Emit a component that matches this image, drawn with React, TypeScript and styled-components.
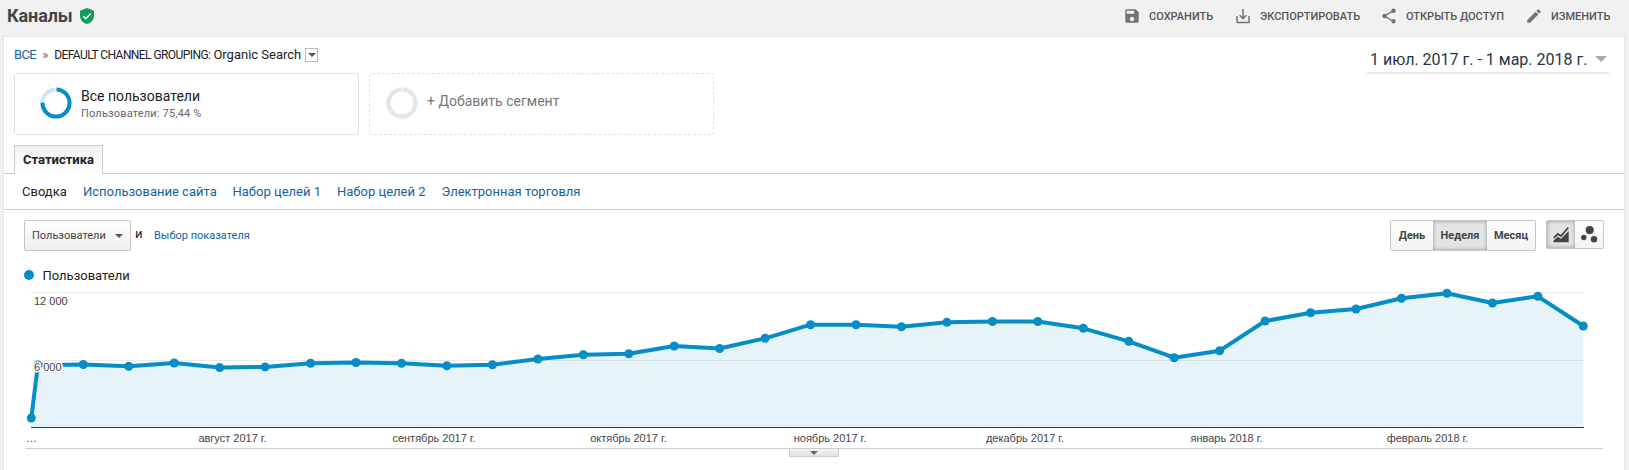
import styled, { createGlobalStyle, css } from 'styled-components';
import { MdSave, MdShare, MdEdit } from 'react-icons/md';

const FIRST_X = 83.3;
const STEP = 45.455;
const AXIS_Y = 427;

const weeks = [
  364.5, 366.2, 363, 367.6, 366.9, 363.3, 362.5, 363.3, 365.7, 364.7, 359, 354.7, 353.8, 346, 348.5, 338.3, 324.7,
  324.7, 326.8, 322.3, 321.5, 321.5, 328.3, 341.3, 357.7, 350.7, 321, 312.7, 309, 298.2, 293.3, 303, 296.3, 326,
];

const points = [
  [31.3, 418],
  [37.9, 365],
  ...weeks.map((y, i) => [FIRST_X + i * STEP, y]),
];

const months = [
  { label: '…', x: 31.5 },
  { label: 'август 2017 г.', x: 232.5 },
  { label: 'сентябрь 2017 г.', x: 434 },
  { label: 'октябрь 2017 г.', x: 628.5 },
  { label: 'ноябрь 2017 г.', x: 830 },
  { label: 'декабрь 2017 г.', x: 1025 },
  { label: 'январь 2018 г.', x: 1226.5 },
  { label: 'февраль 2018 г.', x: 1427.5 },
];

const Ring = ({ value, color, track }: { value: number; color: string; track: string }) => (
  <RingSvg viewBox="0 0 32 32">
    <circle cx="16" cy="16" r="13.5" fill="none" stroke={track} strokeWidth="4" />
    <circle
      cx="16"
      cy="16"
      r="13.5"
      fill="none"
      stroke={color}
      strokeWidth="4"
      pathLength="100"
      strokeDasharray={`${value} 100`}
      transform="rotate(-90 16 16)"
    />
    <path d="M16 0v5" stroke="#fff" strokeWidth="1" />
  </RingSvg>
);

const Chart = () => {
  const line = points.map(([x, y]) => `${x},${y}`).join(' ');
  return (
    <ChartSvg viewBox="4 285 1620 163">
      <path d="M31 292.5H1584M31 360.5H1584" stroke="#ebebeb" />
      <polygon points={`31.3,${AXIS_Y} ${line} 1583.3,${AXIS_Y}`} fill="#058dc7" fillOpacity="0.1" />
      <polyline points={line} fill="none" stroke="#058dc7" strokeWidth="4" strokeLinejoin="round" />
      {points.map(([x, y]) => (
        <circle key={x} cx={x} cy={y} r="4.5" fill="#058dc7" />
      ))}
      <path d="M31 427.5H1584" stroke="#333" />
      <AxisText x="34" y="305">12 000</AxisText>
      <AxisText x="34" y="371">6 000</AxisText>
      {months.map((m) => (
        <AxisText key={m.label} x={m.x} y="442" textAnchor="middle">
          {m.label}
        </AxisText>
      ))}
    </ChartSvg>
  );
};

const App = () => {
  return (
    <>
      <GlobalStyle />
      <Header>
        <Title>Каналы</Title>
        <Shield viewBox="0 0 14 16">
          <path d="M7 0L0 2.8v4.6C0 11.4 3 15 7 16c4-1 7-4.6 7-8.6V2.8z" fill="#0f9d58" />
          <path d="M3.2 8.2l2.5 2.5 5-5.2" fill="none" stroke="#fff" strokeWidth="1.5" />
        </Shield>
        <Actions>
          <Action $width={111}>
            <MdSave />
            <span>СОХРАНИТЬ</span>
          </Action>
          <Action $width={146}>
            <svg viewBox="0 0 24 24" fill="none" stroke="currentColor" strokeWidth="2">
              <path d="M12 2.5V15M7.5 11l4.5 4.5 4.5-4.5M4 12v7.5q0 1 1 1h14q1 0 1-1V12" />
            </svg>
            <span>ЭКСПОРТИРОВАТЬ</span>
          </Action>
          <Action $width={145}>
            <MdShare />
            <span>ОТКРЫТЬ ДОСТУП</span>
          </Action>
          <Action $width={85}>
            <MdEdit />
            <span>ИЗМЕНИТЬ</span>
          </Action>
        </Actions>
      </Header>
      <Panel>
        <Top>
          <div>
            <Crumbs>
              <CrumbLink>ВСЕ</CrumbLink>
              <Separator>»</Separator>
              <Dimension>DEFAULT CHANNEL GROUPING:</Dimension>
              <span>Organic Search</span>
              <CrumbToggle>
                <Arrow $size={4} $color="#555" />
              </CrumbToggle>
            </Crumbs>
            <Segments>
              <Segment>
                <Ring value={75.44} color="#058dc7" track="#cde8f4" />
                <div>
                  <SegmentName>Все пользователи</SegmentName>
                  <SegmentInfo>Пользователи: 75,44 %</SegmentInfo>
                </div>
              </Segment>
              <Segment $empty>
                <Ring value={100} color="#e5e5e5" track="#e5e5e5" />
                <AddSegment>+ Добавить сегмент</AddSegment>
              </Segment>
            </Segments>
          </div>
          <DateRange>
            <span>1 июл. 2017 г. - 1 мар. 2018 г.</span>
            <Arrow $size={6} $color="#aaa" />
          </DateRange>
        </Top>
        <TabBar>
          <Tab>Статистика</Tab>
        </TabBar>
        <SubNav>
          <SubItem $active $width={61}>Сводка</SubItem>
          <SubItem $width={149.5}>Использование сайта</SubItem>
          <SubItem $width={104.5}>Набор целей 1</SubItem>
          <SubItem $width={104.5}>Набор целей 2</SubItem>
          <SubItem $width={140}>Электронная торговля</SubItem>
        </SubNav>
        <Controls>
          <Select>
            <span>Пользователи</span>
            <Arrow $size={4} $color="#555" />
          </Select>
          <And>и</And>
          <MetricLink>Выбор показателя</MetricLink>
          <Periods>
            <Period $width={42}>День</Period>
            <Period $active $width={54}>Неделя</Period>
            <Period $width={48}>Месяц</Period>
          </Periods>
          <Views>
            <View $active>
              <svg width="17" height="17" viewBox="0 0 17 17">
                <path d="M.5 16.2v-1.7l4.3-3.8 3.2 2L15.7 5v11.2z" fill="#444" />
                <path d="M.8 11.8l4-3.8 3.2 2 7.3-8.5" fill="none" stroke="#444" strokeWidth="1.8" />
              </svg>
            </View>
            <View>
              <svg width="17" height="17" viewBox="0 0 17 17" fill="#444">
                <circle cx="8.7" cy="4.1" r="4.1" />
                <circle cx="2.8" cy="11.5" r="2.7" />
                <circle cx="13" cy="13.2" r="3.2" />
              </svg>
            </View>
          </Views>
        </Controls>
        <Legend>
          <Dot />
          <span>Пользователи</span>
        </Legend>
        <Chart />
        <Divider>
          <Handle>
            <Arrow $size={4} $color="#666" />
          </Handle>
        </Divider>
      </Panel>
    </>
  );
};

export default App;

const GlobalStyle = createGlobalStyle`
  * {
    box-sizing: border-box;
  }

  body {
    margin: 0;
    background: #f1f1f1;
    font-family: Roboto, 'Open Sans', sans-serif;
    color: #222;
    overflow: hidden;
  }

  svg {
    display: block;
    flex-shrink: 0;
  }
`;

const Header = styled.header`
  height: 36px;
  padding: 0 19px 4px 7px;
  display: flex;
  align-items: center;
`;

const Title = styled.h1`
  margin: 0;
  width: 73px;
  font-size: 18px;
  line-height: 22px;
  font-weight: 700;
  letter-spacing: -0.1px;
  color: #444;
`;

const Shield = styled.svg`
  width: 14px;
  height: 16px;
`;

const Actions = styled.div`
  display: flex;
  margin-left: auto;
`;

const Action = styled.div<{ $width: number }>`
  width: ${({ $width }) => $width}px;
  display: flex;
  align-items: center;
  gap: 8px;
  font-size: 11px;
  font-weight: 500;
  color: #555;
  white-space: nowrap;

  svg {
    width: 18px;
    height: 18px;
    color: #737373;
  }
`;

const Panel = styled.main`
  height: 434px;
  margin: 0 4px 0 3px;
  background: #fff;
  border: 1px solid #e5e5e5;
  border-bottom: 0;
`;

const Top = styled.div`
  height: 98px;
  padding: 0 15px 0 10px;
  display: flex;
  justify-content: space-between;
`;

const Crumbs = styled.div`
  height: 36px;
  padding-top: 10px;
  display: flex;
  font-size: 13px;
  line-height: 15px;
`;

const CrumbLink = styled.a`
  color: #15629e;
  letter-spacing: -0.6px;
`;

const Separator = styled.span`
  margin: 0 6px 0 6px;
  color: #666;
`;

const Dimension = styled.span`
  margin-right: 3px;
  font-size: 12px;
  line-height: 16px;
  letter-spacing: -0.57px;
`;

const CrumbToggle = styled.span`
  width: 13px;
  height: 14px;
  margin: 1px 0 0 4px;
  display: flex;
  align-items: center;
  justify-content: center;
  border: 1px solid #bbb;
`;

const Arrow = styled.i<{ $size: number; $color: string }>`
  border: solid transparent;
  border-width: ${({ $size }) => `${$size}px ${$size}px 0`};
  border-top-color: ${({ $color }) => $color};
`;

const Segments = styled.div`
  display: flex;
  gap: 10px;
`;

const Segment = styled.div<{ $empty?: boolean }>`
  width: 345px;
  height: 62px;
  padding: 0 0 1.5px ${({ $empty }) => ($empty ? 15.5 : 24.5)}px;
  display: flex;
  align-items: center;
  gap: 9.5px;
  border: 1px ${({ $empty }) => ($empty ? 'dashed' : 'solid')} #e1e1e1;
  border-radius: 3px;
`;

const RingSvg = styled.svg`
  width: 32px;
  height: 32px;
`;

const SegmentName = styled.div`
  padding-top: 2px;
  font-size: 14px;
  line-height: 19px;
`;

const SegmentInfo = styled.div`
  font-size: 11px;
  line-height: 16px;
  letter-spacing: 0.17px;
  color: #666;
`;

const AddSegment = styled.div`
  padding-bottom: 5px;
  font-size: 14px;
  line-height: 18px;
  color: #777;
`;

const DateRange = styled.div`
  width: 242px;
  height: 37px;
  padding: 9px 2px 0 3px;
  display: flex;
  align-items: center;
  justify-content: space-between;
  border-bottom: 2px solid #ebebeb;
  font-size: 16px;
  color: #243648;
  white-space: nowrap;
`;

const TabBar = styled.div`
  height: 39px;
  padding: 10px 10px 0;
  display: flex;
  border-bottom: 1px solid #ccc;
`;

const Tab = styled.div`
  width: 89px;
  height: 29px;
  margin-bottom: -1px;
  padding-bottom: 1px;
  display: flex;
  align-items: center;
  justify-content: center;
  border: 1px solid #ccc;
  border-bottom: 0;
  background: linear-gradient(#f2f2f2, #fff);
  font-size: 13px;
  line-height: 15px;
  font-weight: 700;
`;

const SubNav = styled.nav`
  height: 36px;
  padding-left: 18px;
  display: flex;
  align-items: center;
  border-bottom: 1px solid #ccc;
  font-size: 13px;
  white-space: nowrap;
`;

const SubItem = styled.a<{ $width: number; $active?: boolean }>`
  width: ${({ $width }) => $width}px;
  color: ${({ $active }) => ($active ? '#222' : '#15629e')};
`;

const Controls = styled.div`
  height: 52px;
  padding: 10px 20px 0;
  display: flex;
  align-items: flex-start;
  font-size: 11px;
  line-height: 29px;
`;

const Select = styled.div`
  width: 107px;
  height: 31px;
  padding: 0 7px;
  display: flex;
  align-items: center;
  justify-content: space-between;
  border: 1px solid #c6c6c6;
  border-radius: 2px;
  background: linear-gradient(#fefefe, #efefef);
  color: #444;
`;

const And = styled.span`
  width: 23px;
  padding-left: 4px;
  font-size: 13px;
  line-height: 27px;
`;

const MetricLink = styled.a`
  color: #15629e;
  line-height: 31px;
`;

const group = css`
  display: flex;
  border: 1px solid #c6c6c6;
  border-radius: 2px;
  overflow: hidden;
`;

const pressed = css`
  background: #e4e4e4;
  box-shadow: inset 0 0 4px rgba(0, 0, 0, 0.35);
`;

const Periods = styled.div`
  ${group}
  height: 31px;
  margin-left: auto;
`;

const Period = styled.div<{ $width: number; $active?: boolean }>`
  width: ${({ $width }) => $width}px;
  background: linear-gradient(#fefefe, #f3f3f3);
  font-weight: 700;
  color: #444;
  text-align: center;
  ${({ $active }) => $active && pressed}
`;

const Views = styled.div`
  ${group}
  height: 29px;
  margin-left: 10px;
`;

const View = styled.div<{ $active?: boolean }>`
  width: 28px;
  padding-bottom: 1px;
  display: flex;
  align-items: center;
  justify-content: center;
  background: linear-gradient(#fefefe, #f3f3f3);
  ${({ $active }) => $active && pressed}
`;

const Legend = styled.div`
  height: 23px;
  padding: 3px 0 0 20px;
  display: flex;
  align-items: center;
  gap: 8.5px;
  font-size: 13px;
  line-height: 15px;
`;

const Dot = styled.i`
  width: 10px;
  height: 10px;
  border-radius: 50%;
  background: #058dc7;
`;

const ChartSvg = styled.svg`
  width: 1620px;
  height: 163px;
`;

const AxisText = styled.text`
  font-family: 'Liberation Sans', Arial, sans-serif;
  font-size: 11px;
  fill: #444;
  stroke: #fff;
  stroke-width: 3px;
  paint-order: stroke;
`;

const Divider = styled.div`
  margin: 0 21px;
  display: flex;
  justify-content: center;
  border-top: 1px solid #ccc;
`;

const Handle = styled.div`
  width: 50px;
  height: 8px;
  display: flex;
  align-items: center;
  justify-content: center;
  border: 1px solid #ccc;
  border-top: 0;
  background: linear-gradient(#f3f3f3, #e2e2e2);
`;
